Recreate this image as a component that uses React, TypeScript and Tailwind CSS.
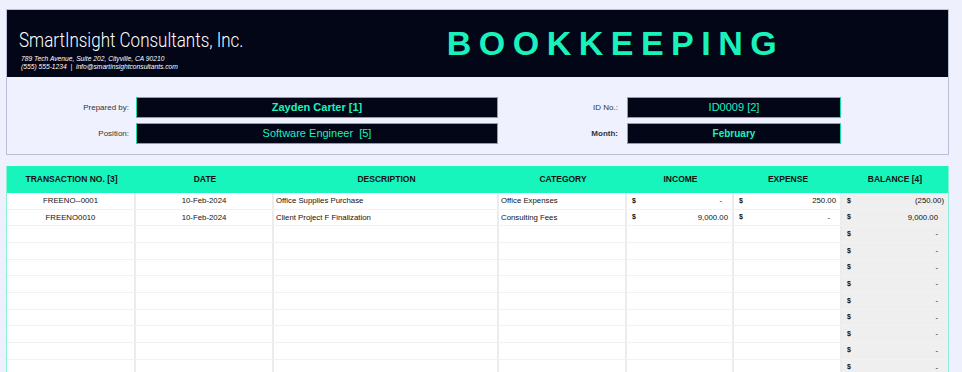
import React from "react";

const cols = [
  "w-[129px]",
  "w-[138px]",
  "w-[225px]",
  "w-[128px]",
  "w-[107px]",
  "w-[108px]",
  "flex-1",
];

const rows = [
  { no: "FREENO--0001", date: "10-Feb-2024", desc: "Office Supplies Purchase", cat: "Office Expenses", income: "-", expense: "250.00", balance: "(250.00)" },
  { no: "FREENO0010", date: "10-Feb-2024", desc: "Client Project F Finalization", cat: "Consulting Fees", income: "9,000.00", expense: "-", balance: "9,000.00" },
];

function Field({ children, className = "" }: { children: React.ReactNode; className?: string }) {
  return (
    <div
      className={`flex h-[21px] items-center justify-center border border-[#19d9a8] bg-[#020617] text-[#1af2bb] ${className}`}
    >
      {children}
    </div>
  );
}

function Money({ v, pad }: { v?: string; pad?: boolean }) {
  return (
    <div className="flex h-full items-center justify-between pl-[5px] pr-[4px]">
      <span className="text-[7px] font-bold">{v !== undefined ? "$" : ""}</span>
      <span className={pad ? "pr-[6px]" : ""}>{v}</span>
    </div>
  );
}

export default function App() {
  const blanks = Array.from({ length: 12 });
  return (
    <div className="h-[372px] w-[962px] overflow-hidden bg-[#eef1fd] pt-[9px] pl-[6px] font-['Liberation_Sans',Arial,sans-serif]">
      <div className="w-[943px] border border-[#b9c0d6]">
        <div className="flex h-[67px] items-center bg-[#020617]">
          <div className="w-[300px] pl-[12px] pt-[12px]">
            <div className="origin-left scale-x-[0.85] whitespace-nowrap font-['Roboto',sans-serif] text-[20px] font-light leading-[24px] text-white">
              SmartInsight Consultants, Inc.
            </div>
            <div className="mt-[3px] pl-[2px] text-[6.7px] italic leading-[8px] text-white">
              789 Tech Avenue, Suite 202, Cityville, CA 90210
            </div>
            <div className="pl-[2px] text-[6.7px] italic leading-[8px] text-white">
              (555) 555-1234 &nbsp;| &nbsp;info@smartinsightconsultants.com
            </div>
          </div>
          <div className="flex-1 pr-[24px] text-center text-[34px] font-bold tracking-[0.22em] text-[#1af2bb]">
            BOOKKEEPING
          </div>
        </div>
        <div className="h-[77px] bg-[#eff2fe] pt-[20px]">
          <div className="grid grid-cols-[122px_362px_115px_214px] gap-x-[7px] gap-y-[5px] text-[#333]">
            <div className="flex items-center justify-end text-[8px]">Prepared by:</div>
            <Field className="text-[11px] font-bold">Zayden Carter [1]</Field>
            <div className="flex items-center justify-end pr-[2px] text-[8px]">ID No.:</div>
            <Field className="text-[11px]">ID0009 [2]</Field>
            <div className="flex items-center justify-end text-[8px]">Position:</div>
            <Field className="text-[11px]">Software Engineer&nbsp; [5]</Field>
            <div className="flex items-center justify-end pr-[2px] text-[8px] font-bold">Month:</div>
            <Field className="text-[10px] font-bold">February</Field>
          </div>
        </div>
      </div>

      <div className="mt-[11px] w-[943px] border-x border-[#8ef0d2] bg-white">
        <div className="flex h-[27px] items-center bg-[#17f5bd] text-[8.5px] font-bold text-[#111]">
          {["TRANSACTION NO. [3]", "DATE", "DESCRIPTION", "CATEGORY", "INCOME", "EXPENSE", "BALANCE [4]"].map((h, i) => (
            <div key={h} className={`${cols[i]} text-center`}>
              {h}
            </div>
          ))}
        </div>
        {rows.map((r) => (
          <div key={r.no} className="flex h-[16.67px] border-b border-[#f2f2f2] text-[7.8px] text-[#111]">
            <div className={`${cols[0]} flex items-center justify-center border-r-2 border-[#ececec]`}>{r.no}</div>
            <div className={`${cols[1]} flex items-center justify-center border-r-2 border-[#ececec]`}>{r.date}</div>
            <div className={`${cols[2]} flex items-center border-r-2 border-[#ececec] pl-[2px]`}>{r.desc}</div>
            <div className={`${cols[3]} flex items-center border-r-2 border-[#ececec] pl-[2px]`}>{r.cat}</div>
            <div className={`${cols[4]} border-r-2 border-[#ececec]`}>
              <Money v={r.income} pad={r.income === "-"} />
            </div>
            <div className={`${cols[5]} border-r-2 border-[#ececec]`}>
              <Money v={r.expense} pad={r.expense === "-"} />
            </div>
            <div className={`${cols[6]} bg-[#efefef]`}>
              <Money v={r.balance} pad={!r.balance.startsWith("(")} />
            </div>
          </div>
        ))}
        {blanks.map((_, i) => (
          <div key={i} className="flex h-[16.67px] border-b border-[#f2f2f2] text-[7.8px] text-[#111]">
            <div className={`${cols[0]} border-r-2 border-[#ececec]`} />
            <div className={`${cols[1]} border-r-2 border-[#ececec]`} />
            <div className={`${cols[2]} border-r-2 border-[#ececec]`} />
            <div className={`${cols[3]} border-r-2 border-[#ececec]`} />
            <div className={`${cols[4]} border-r-2 border-[#ececec]`} />
            <div className={`${cols[5]} border-r-2 border-[#ececec]`} />
            <div className={`${cols[6]} bg-[#efefef]`}>
              <Money v="-" pad />
            </div>
          </div>
        ))}
      </div>
    </div>
  );
}
